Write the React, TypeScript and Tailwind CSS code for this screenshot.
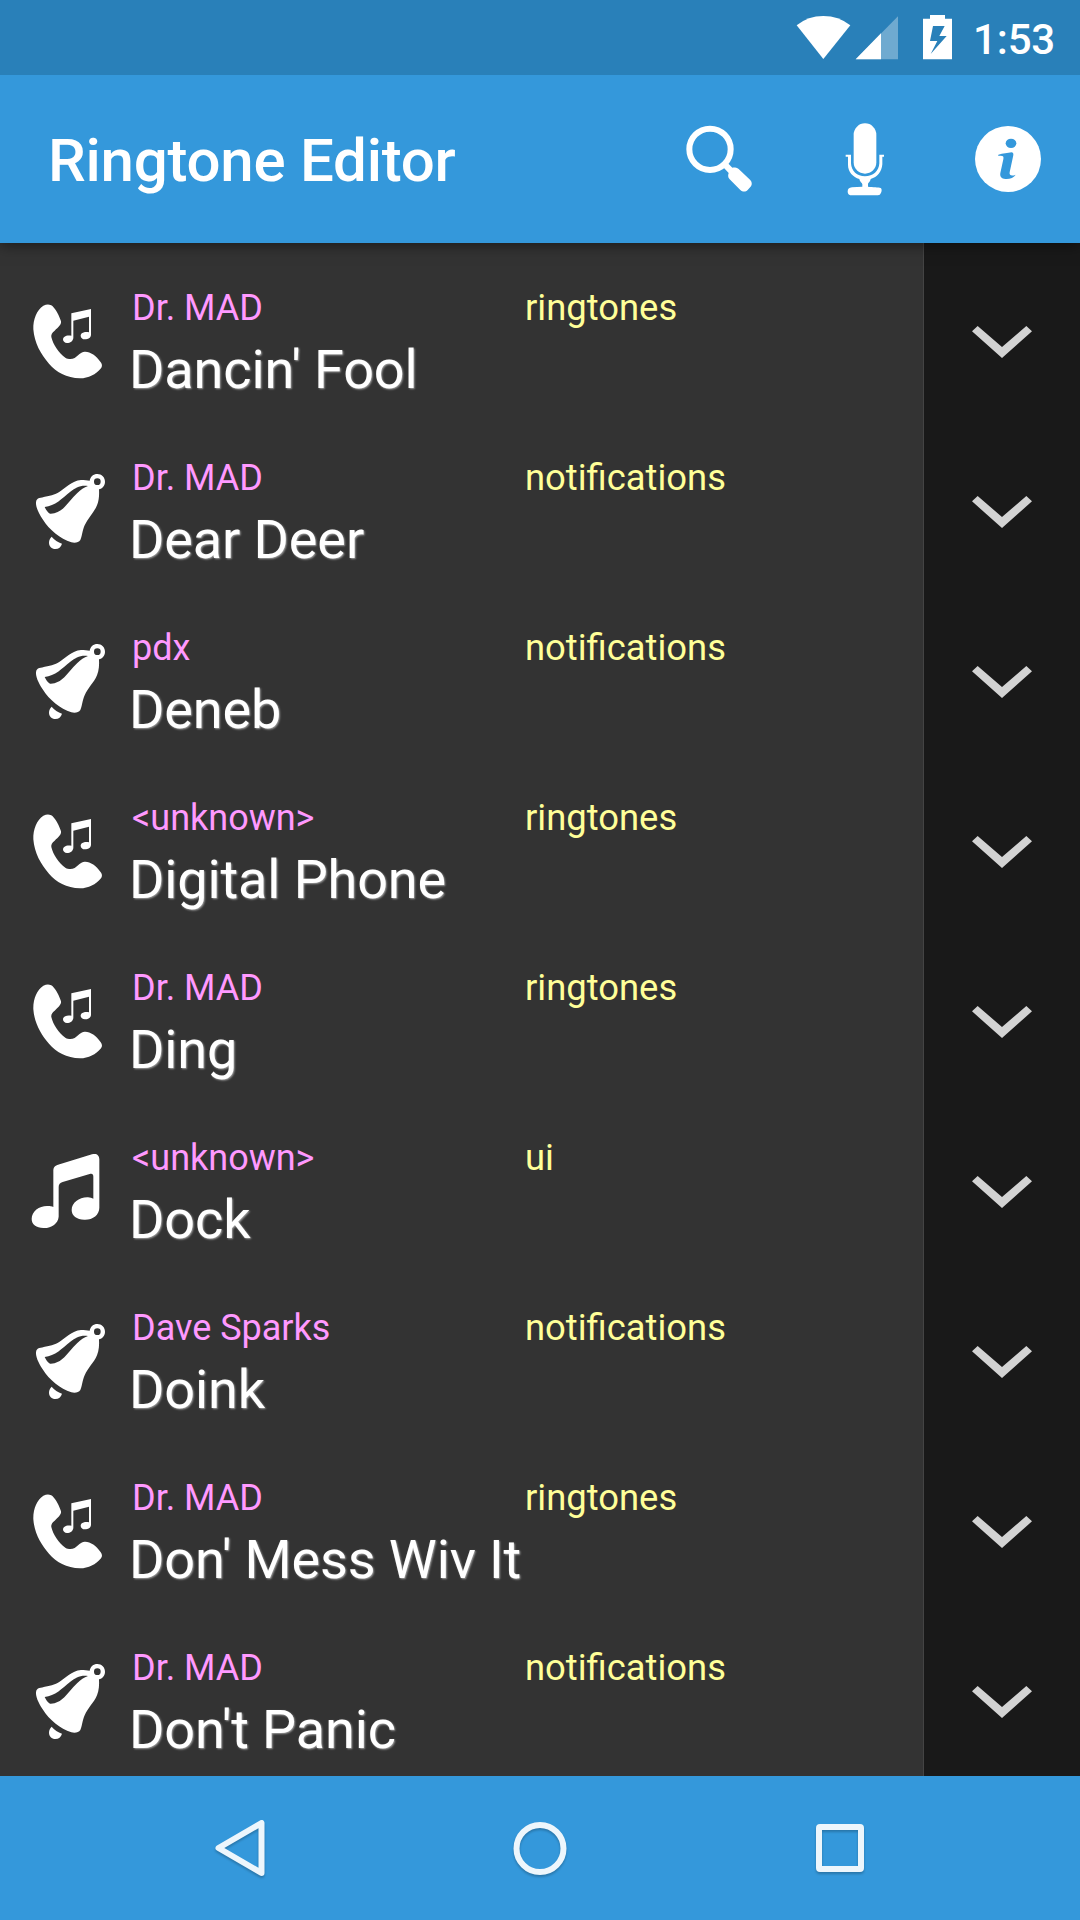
type Kind = "ringtone" | "notification" | "music";

const items: { artist: string; title: string; folder: string; kind: Kind }[] = [
  { artist: "Dr. MAD", title: "Dancin' Fool", folder: "ringtones", kind: "ringtone" },
  { artist: "Dr. MAD", title: "Dear Deer", folder: "notifications", kind: "notification" },
  { artist: "pdx", title: "Deneb", folder: "notifications", kind: "notification" },
  { artist: "<unknown>", title: "Digital Phone", folder: "ringtones", kind: "ringtone" },
  { artist: "Dr. MAD", title: "Ding", folder: "ringtones", kind: "ringtone" },
  { artist: "<unknown>", title: "Dock", folder: "ui", kind: "music" },
  { artist: "Dave Sparks", title: "Doink", folder: "notifications", kind: "notification" },
  { artist: "Dr. MAD", title: "Don' Mess Wiv It", folder: "ringtones", kind: "ringtone" },
  { artist: "Dr. MAD", title: "Don't Panic", folder: "notifications", kind: "notification" },
];

function KindIcon({ kind }: { kind: Kind }) {
  if (kind === "ringtone") {
    return (
      <svg className="h-[140px] w-[110px]" viewBox="0 6 330 420" fill="white">
        <path d="M130 107C142 101 152 103 158 109C168 119 178 138 183 154C185 163 175 172 164 182C156 188 153 194 154 201C159 223 176 249 196 263C206 269 216 268 224 264C235 256 242 246 254 245C270 244 289 257 301 275C308 284 307 290 301 297C289 312 265 325 240 325C200 323 168 306 147 281C123 254 103 219 100 178C99 146 111 120 130 107Z" />
        <path fillRule="evenodd" d="M214 130L273 117V195C272 204 264 208 255 208C247 208 242 203 242 197C242 190 252 184 267 187V140L220 152V204C219 213 211 219 201 219C194 219 189 214 189 208C189 200 199 194 214 197Z" />
      </svg>
    );
  }
  if (kind === "notification") {
    return (
      <svg className="h-[140px] w-[110px]" viewBox="0 -24 330 420" fill="white">
        <path fillRule="evenodd" d="M118 144C142 138 158 137 174 128C196 115 215 92 243 90C253 90 262 91 269 92C271 80 280 72 292 72C305 72 315 82 315 95C315 107 307 116 297 118C298 135 297 151 291 166C282 188 264 203 254 226C247 242 246 260 241 270C236 278 225 279 214 277C181 267 148 240 128 208C114 187 107 169 108 157C109 149 112 146 118 144ZM292 85A10 10 0 1 0 292 105A10 10 0 1 0 292 85ZM134 171C138 180 143 187 150 191C166 192 181 184 193 172C205 160 216 143 232 129C242 119 252 113 264 108C243 104 226 113 210 126C188 144 165 168 134 171Z" />
        <path d="M155 260C163 269 174 277 186 281C183 291 176 297 166 297C155 297 147 289 147 278C147 271 150 265 155 260Z" />
      </svg>
    );
  }
  return (
    <svg className="h-[140px] w-[110px]" viewBox="0 -24 330 420" fill="white">
      <path d="M174 104L276 73C289 69 298 75 298 88V233C298 255 278 270 253 269C230 269 215 257 215 240C215 218 238 201 264 202C270 203 276 204 280 206V140C280 132 276 130 269 132L188 156C180 159 176 163 176 171V260C174 281 154 295 130 294C109 294 95 283 95 267C95 243 119 227 143 228C150 228 156 229 160 231V124C160 112 164 107 174 104Z" />
    </svg>
  );
}

function StatusBar() {
  return (
    <div className="relative z-20 flex h-[75px] items-center justify-end bg-[#2980b9] pr-[25px]">
      {/* wifi, signal, charging battery */}
      <svg className="-mr-[2px] h-[75px] w-[195px]" viewBox="0 0 585 225" fill="white">
        <path d="M50 76Q84 48 130 48Q176 48 211 76L130 177Z" />
        <path d="M354 49V178H227Z" fillOpacity="0.33" />
        <path d="M303 100V178H227Z" />
        <path fillRule="evenodd" d="M450 45H495V56H516V178H429V56H450ZM459 78L450 123H472L452 162L500 108H478L494 78Z" />
      </svg>
      <span className="pt-[4px] text-[42px] leading-[50px] font-medium tracking-[-0.2px]">1:53</span>
    </div>
  );
}

function AppBar() {
  return (
    <header className="relative z-10 flex h-[168px] items-center bg-[#3498db] pl-12 shadow-[0_2px_14px_rgba(0,0,0,0.5)]">
      <h1 className="grow pt-[4px] text-[60px] leading-[70px] font-medium tracking-[-0.25px]">Ringtone Editor</h1>
      <button className="h-[168px] w-36" aria-label="Search">
        <svg className="h-full w-full" viewBox="-36 -75 432 504" fill="white">
          <circle cx="150" cy="148" r="62" fill="none" stroke="white" strokeWidth="18" />
          <path d="M187 199L201 187L217 203C223 202 230 203 236 207L270 239C276 245 277 252 273 259L263 270C257 276 248 276 241 270L209 238C203 232 204 224 206 219Z" />
        </svg>
      </button>
      <button className="h-[168px] w-36" aria-label="Record">
        <svg className="h-full w-full" viewBox="396 -75 432 504" fill="white">
          <rect x="581" y="70" width="68" height="151" rx="34" />
          <path d="M557 164H573V190C574 213 591 229 615 229C639 229 657 213 658 190V164H672V170H667V193C665 216 652 232 632 237C630 248 624 247 624 253V260C638 262 656 261 662 264C667 268 665 277 661 282C659 285 656 286 650 286H577C567 286 563 282 563 275C563 266 567 263 576 262L607 260V253C606 247 600 247 598 237C579 231 564 216 564 194V170H557Z" />
        </svg>
      </button>
      <button className="h-[168px] w-36" aria-label="About">
        <svg className="h-full w-full" viewBox="828 -75 432 504">
          <circle cx="1044" cy="177" r="99" fill="white" />
          <ellipse cx="1053" cy="130" rx="16" ry="14" fill="#3498db" />
          <path d="M1015 164C1029 160 1043 159 1055 157C1061 158 1061 163 1059 170L1049 217C1047 227 1056 229 1067 224C1062 233 1049 238 1036 237C1025 236 1019 230 1021 219L1030 178C1032 169 1029 166 1015 168Z" fill="#3498db" />
        </svg>
      </button>
    </header>
  );
}

export default function App() {
  return (
    <div className="flex h-[1920px] w-[1080px] flex-col overflow-hidden bg-[#333333] font-['Roboto',sans-serif] text-white">
      <StatusBar />
      <AppBar />
      <main className="flex h-[1533px] flex-col overflow-hidden">
        <div className="flex h-[14px] shrink-0">
          <div className="w-[924px] border-r border-[#444444]" />
          <div className="grow bg-[#191919]" />
        </div>
        {items.map((item) => (
          <div key={item.title} className="flex h-[170px] shrink-0">
            <div className="flex w-[924px] border-r border-[#444444]">
              <div className="flex w-[129px] items-center">
                <KindIcon kind={item.kind} />
              </div>
              <div className="grow pt-[30px]">
                <div className="flex pl-[3px] leading-[42px]">
                  <span className="w-[393px] text-[36px] text-[#ff99ff]">{item.artist}</span>
                  <span className="text-[36.4px] text-[#ffff99]">{item.folder}</span>
                </div>
                <div className="mt-[10px] text-[54px] leading-[62px] tracking-[-0.12px] [text-shadow:1px_1px_2px_#a0a0a0]">
                  {item.title}
                </div>
              </div>
            </div>
            <button className="flex grow items-center justify-center bg-[#191919]" aria-label="More">
              <svg className="h-8 w-[60px]" viewBox="216 288 180 96" fill="#d3d3d3">
                <path d="M233 288L306 351L379 288L396 304L306 384L216 304Z" />
              </svg>
            </button>
          </div>
        ))}
      </main>
      <nav className="flex h-36 items-center justify-center gap-[156px] bg-[#3498db]">
        {[
          <path key="back" d="M93.5 19V69L50.5 44Z" />,
          <circle key="home" cx="72" cy="44.5" r="23.5" />,
          <rect key="recent" x="51" y="23" width="42" height="42" rx="1" />,
        ].map((shape, i) => (
          <svg
            key={i}
            className="h-[88px] w-36 drop-shadow-[0_2px_1px_rgba(0,0,0,0.22)]"
            fill="none"
            stroke="#edf6fc"
            strokeWidth="6"
            strokeLinejoin="round"
            viewBox="0 0 144 88"
          >
            {shape}
          </svg>
        ))}
      </nav>
    </div>
  );
}
